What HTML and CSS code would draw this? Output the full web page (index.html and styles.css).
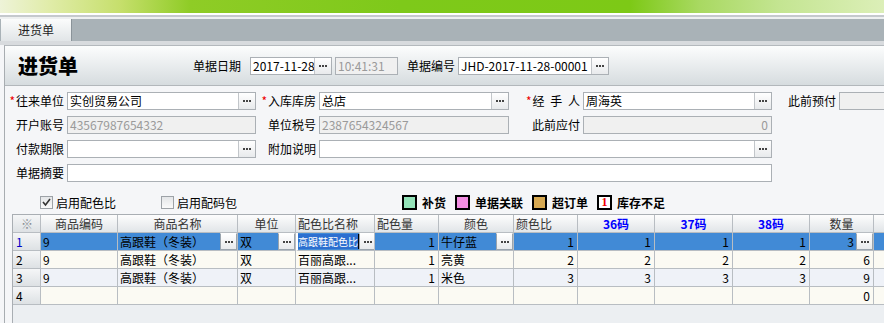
FILE: index.html
```html
<!DOCTYPE html>
<html lang="zh-CN">
<head>
   <meta charset="UTF-8"><title>进货单</title>
   <link rel="stylesheet" href="styles.css">
</head> <body>

<div class="banner"></div>
<div class="topline"></div>
<nav class="tabs"><span class="tab">进货单</span></nav>
<div class="strip"></div>

<section class="panel">
   <header class="head">
      <h1>进货单</h1>
      <label>单据日期</label>
      <div class="box w-date"><span class="val">2017-11-28</span><i class="btn"></i></div>
      <div class="box off w-time"><span class="val">10:41:31</span></div>
      <label class="no-label">单据编号</label>
      <div class="box w-no"><span class="val">JHD-2017-11-28-00001</span><i class="btn"></i></div>
   </header>

   <div class="form">
      <label class="first"><b class="req">*</b>往来单位</label>
      <div class="box"><span class="val">实创贸易公司</span><i class="btn"></i></div>
      <label><b class="req">*</b>入库库房</label>
      <div class="box"><span class="val">总店</span><i class="btn"></i></div>
      <label><b class="req">*</b><span class="spaced">经 手 人</span></label>
      <div class="box"><span class="val">周海英</span><i class="btn"></i></div>
      <label>此前预付</label>
      <div class="box off"><span class="val"></span></div>

      <label class="first">开户账号</label>
      <div class="box off"><span class="val">43567987654332</span></div>
      <label>单位税号</label>
      <div class="box off"><span class="val">2387654324567</span></div>
      <label>此前应付</label>
      <div class="box off num"><span class="val">0</span></div>

      <label class="first">付款期限</label>
      <div class="box"><span class="val"></span><i class="btn"></i></div>
      <label>附加说明</label>
      <div class="box span3"><span class="val"></span><i class="btn"></i></div>

      <label class="first">单据摘要</label>
      <div class="box span5"><span class="val"></span></div>
   </div>

   <div class="opts">
      <span class="opt"><i class="chk on"><svg width="9" height="9" viewBox="0 0 9 9"><polyline points="1,4 3.5,7 8,1" fill="none" stroke="#333" stroke-width="1.6"/></svg></i>启用配色比</span>
      <span class="opt"><i class="chk"></i>启用配码包</span>
      <span class="legend">
         <i class="key k-green"></i><b>补货</b>
         <i class="key k-pink"></i><b>单据关联</b>
         <i class="key k-tan"></i><b>超订单</b>
         <i class="key k-low">1</i><b>库存不足</b>
      </span>
   </div>

   <div class="grid">
      <div class="c h rh star">※</div>
      <div class="c h">商品编码</div>
      <div class="c h">商品名称</div>
      <div class="c h">单位</div>
      <div class="c h l">配色比名称</div>
      <div class="c h l">配色量</div>
      <div class="c h">颜色</div>
      <div class="c h l">颜色比</div>
      <div class="c h sz">36码</div>
      <div class="c h sz">37码</div>
      <div class="c h sz">38码</div>
      <div class="c h">数量</div>
      <div class="c h"></div>

      <div class="row sel">
         <div class="c rh cur">1</div>
         <div class="c">9</div>
         <div class="c ed">高跟鞋（冬装）<i class="btn"></i></div>
         <div class="c ed">双<i class="btn"></i></div>
         <div class="c ed edit"><span class="hl">高跟鞋配色比</span><i class="btn"></i></div>
         <div class="c n">1</div>
         <div class="c ed">牛仔蓝<i class="btn"></i></div>
         <div class="c n">1</div>
         <div class="c n">1</div>
         <div class="c n">1</div>
         <div class="c n">1</div>
         <div class="c ed qty">3<i class="btn"></i></div>
         <div class="c"></div>
      </div>

      <div class="row odd">
         <div class="c rh">2</div>
         <div class="c">9</div>
         <div class="c">高跟鞋（冬装）</div>
         <div class="c">双</div>
         <div class="c">百丽高跟...</div>
         <div class="c n">1</div>
         <div class="c">亮黄</div>
         <div class="c n">2</div>
         <div class="c n">2</div>
         <div class="c n">2</div>
         <div class="c n">2</div>
         <div class="c n">6</div>
         <div class="c"></div>
      </div>

      <div class="row even">
         <div class="c rh">3</div>
         <div class="c">9</div>
         <div class="c">高跟鞋（冬装）</div>
         <div class="c">双</div>
         <div class="c">百丽高跟...</div>
         <div class="c n">1</div>
         <div class="c">米色</div>
         <div class="c n">3</div>
         <div class="c n">3</div>
         <div class="c n">3</div>
         <div class="c n">3</div>
         <div class="c n">9</div>
         <div class="c"></div>
      </div>

      <div class="row odd">
         <div class="c rh">4</div>
         <div class="c"></div>
         <div class="c"></div>
         <div class="c"></div>
         <div class="c"></div>
         <div class="c"></div>
         <div class="c"></div>
         <div class="c"></div>
         <div class="c"></div>
         <div class="c"></div>
         <div class="c"></div>
         <div class="c n">0</div>
         <div class="c"></div>
      </div>
   </div>
</section>

</body> </html>
```

FILE: styles.css
```css
* {
   box-sizing: border-box;
}

body {
   margin: 0;
   width: 884px;
   height: 323px;
   overflow: hidden;
   font: 12px "Noto Sans CJK SC", sans-serif;
   color: #000;
   background: #f5f6f8;
}

i, b {
   font-style: normal;
}

/* top chrome */
.banner {
   height: 13px;
   background: linear-gradient(90deg, #eef3d8 0, #e0eca8 50px, #c6df6c 120px, #8fcc26 190px, #7ec91a 400px, #7dc916 630px, #a9d962 700px, #c4e592 780px, #dcefb8 884px);
}

.topline {
   height: 6px;
   background: linear-gradient(#fff 0 2px, #c5c9cd 2px 4px, #eef0f1 4px);
}

.tabs {
   height: 22px;
   padding-left: 1px;
   display: flex;
   background: #a9b2b7;
}

.tab {
   width: 71px;
   padding-left: 17px;
   line-height: 22px;
   color: #222;
   background: linear-gradient(#fbfcfc, #e1e5e7);
   border-right: 1px solid #8a9399;
}

.strip {
   height: 4px;
   background: #d8dbde;
}

/* panel */
.panel {
   margin-left: 4px;
   width: 900px;
   height: 278px;
   overflow: hidden;
   border-left: 1px solid #a8adb1;
   border-top: 1px solid #b4b9bd;
   background: #f5f6f8;
}

.head {
   height: 40px;
   display: flex;
   align-items: center;
   padding-left: 13px;
   background: linear-gradient(#fcfdfd, #d6dcdf);
   border-bottom: 1px solid #b2b7bb;
}

.head h1 {
   margin: 0;
   width: 175px;
   font-size: 20px;
   font-weight: 900;
   line-height: 22px;
}

.head label {
   margin-right: 9px;
}

.head .no-label {
   margin-left: 9px;
   margin-right: 3px;
}

.w-date { width: 82px; }
.w-time { width: 63px; margin-left: 3px; }
.w-no   { width: 151px; }

/* inputs */
.box {
   display: flex;
   height: 18px;
   border: 1px solid #abb0b5;
   background: #fff;
}

.box .val {
   flex: 1;
   padding-left: 2px;
   line-height: 16px;
   white-space: nowrap;
   overflow: hidden;
}

.box.off {
   background: #f0f0f0;
   color: #9a9a9a;
}

.box.num .val {
   text-align: right;
   padding-right: 3px;
}

.btn {
   width: 17px;
   flex-shrink: 0;
   display: flex;
   align-items: center;
   justify-content: center;
   border-left: 1px solid #c2c6ca;
   background: linear-gradient(#fff, #e8eaec);
}

.btn::after {
   content: "";
   width: 8px;
   height: 2px;
   background: linear-gradient(90deg, #444 0 2px, transparent 2px 3px, #444 3px 5px, transparent 5px 6px, #444 6px 8px);
}

/* form grid */
.form {
   display: grid;
   grid-template-columns: 62px 189px 63px 190px 74px 189px 67px 60px;
   grid-auto-rows: 18px;
   row-gap: 6px;
   padding-top: 6px;
}

.form label {
   text-align: right;
   padding-right: 3px;
   line-height: 18px;
   white-space: nowrap;
}

.form .first {
   grid-column: 1;
}

.req {
   color: #e00;
   font-weight: normal;
   margin-right: 1px;
}

.spaced {
   word-spacing: 3px;
}

.span3 { grid-column: span 3; }
.span5 { grid-column: span 5; }

/* options + legend */
.opts {
   display: flex;
   align-items: center;
   height: 24px;
   margin-top: 8px;
   padding-left: 35px;
}

.opt {
   display: flex;
   align-items: center;
}

.opt + .opt {
   margin-left: 45px;
}

.chk {
   width: 13px;
   height: 13px;
   margin-right: 3px;
   display: flex;
   align-items: center;
   justify-content: center;
   border: 1px solid #9da2a7;
   background: linear-gradient(#e4e6e8, #fafafa);
}

.legend {
   display: flex;
   align-items: center;
   margin-left: 165px;
}

.key {
   width: 15px;
   height: 15px;
   margin-right: 5px;
   border: 2px solid #000;
}

.legend b {
   margin-right: 9px;
   font-weight: bold;
}

.k-green { background: #93e2b8; }
.k-pink  { background: #f38ee2; }
.k-tan   { background: #d7a952; }

.k-low {
   background: #fff;
   color: #e00;
   font: bold 12px "Liberation Serif", serif;
   line-height: 11px;
   text-align: center;
}

/* data grid */
.grid {
   display: grid;
   grid-template-columns: 28px 77px 120px 58px 79px 64px 75px 64px 77px 78px 77px 64px 40px;
   grid-auto-rows: 18px;
   align-content: start;
   margin-left: 7px;
   height: 109px;
   border-top: 1px solid #a9aeb3;
   border-left: 1px solid #a9aeb3;
   background: #eceff2;
}

.row {
   display: contents;
}

.c {
   height: 18px;
   padding: 0 2px;
   line-height: 17px;
   white-space: nowrap;
   overflow: hidden;
   border-right: 1px solid #b8bdc2;
   border-bottom: 1px solid #b8bdc2;
}

.c.h {
   text-align: center;
   color: #333;
   background: linear-gradient(#fdfdfd, #e1e5e8);
}

.c.h.l {
   text-align: left;
}

.c.h.sz {
   color: #00f;
   font-weight: bold;
}

.c.rh {
   text-align: left;
   padding-left: 3px;
   background: linear-gradient(#f5f6f7, #dde1e4);
}

.c.h.star {
   text-align: center;
   color: #8a8f94;
}

.c.cur {
   color: #0000c8;
}

.row.sel .c:not(.rh) { background: #418ad6; }
.row.odd .c:not(.rh) { background: #fbfaf3; }
.row.even .c:not(.rh) { background: #eff2f8; }

.c.n {
   text-align: right;
   padding-right: 3px;
}

.c.ed {
   display: flex;
   padding-right: 0;
}

.c.ed .btn {
   height: 17px;
   margin-left: auto;
   border: 1px solid #9aa4ad;
   border-top-color: #fff;
}

.c.qty {
   justify-content: flex-end;
}

.c.qty .btn {
   margin-left: 2px;
}

.c.edit {
   border-left: 2px solid #fff;
   padding-left: 0;
}

.hl {
   flex-shrink: 0;
   font-size: 10px;
   color: #fff;
   background: #2c6fd0;
   border-right: 1px solid #000;
   line-height: 15px;
   margin: 1px 0 0 0;
   height: 15px;
}

.c.edit .btn {
   margin-left: 0;
}
```
